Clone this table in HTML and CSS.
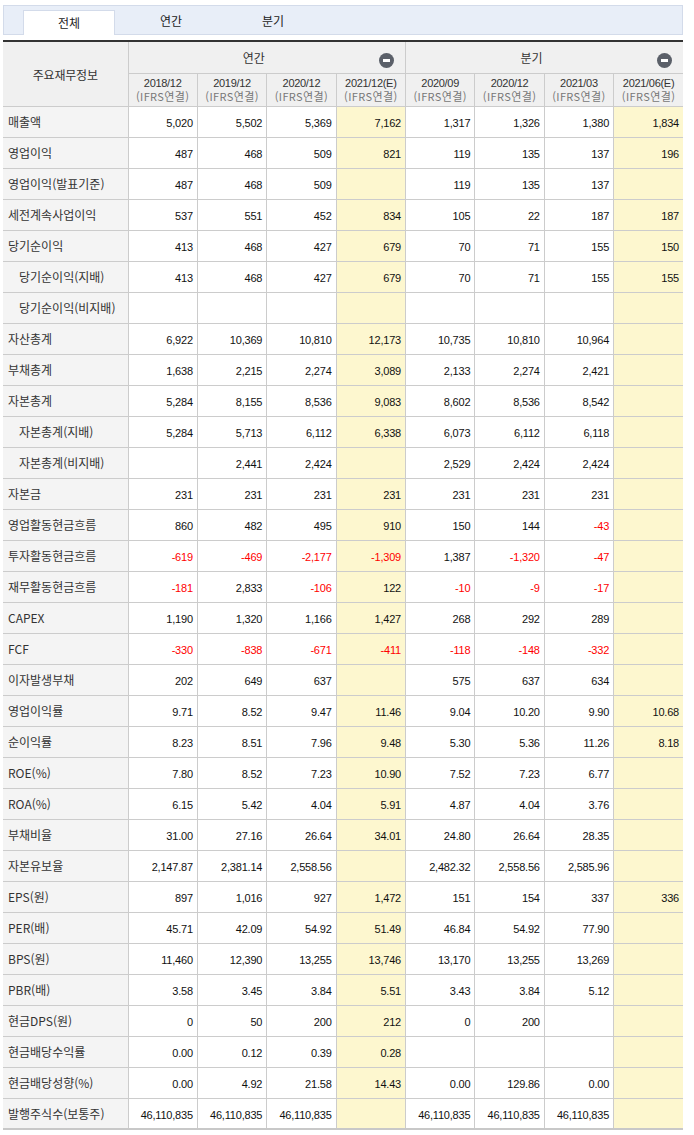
FILE: index.html
```html
<!DOCTYPE html>
<html lang="ko">
<head>
<meta charset="utf-8">
<title>주요재무정보</title>
<link rel="stylesheet" href="styles.css">
</head>
<body>
<div class="page">
  <div class="tabs">
    <span class="tab active">전체</span>
    <span class="tab">연간</span>
    <span class="tab">분기</span>
  </div>
  <table class="fin">
    <colgroup>
      <col class="c-label">
      <col><col><col><col class="est"><col><col><col><col class="est">
    </colgroup>
    <thead>
      <tr class="h1">
        <th rowspan="2" class="corner">주요재무정보</th>
        <th colspan="4" class="grp"><div class="grp-in"><span class="grp-t">연간</span><i class="minus"></i></div></th>
        <th colspan="4" class="grp"><div class="grp-in"><span class="grp-t">분기</span><i class="minus"></i></div></th>
      </tr>
      <tr class="h2">
        <th>2018/12<br><span class="ifrs">(IFRS연결)</span></th>
        <th>2019/12<br><span class="ifrs">(IFRS연결)</span></th>
        <th>2020/12<br><span class="ifrs">(IFRS연결)</span></th>
        <th>2021/12(E)<br><span class="ifrs">(IFRS연결)</span></th>
        <th>2020/09<br><span class="ifrs">(IFRS연결)</span></th>
        <th>2020/12<br><span class="ifrs">(IFRS연결)</span></th>
        <th>2021/03<br><span class="ifrs">(IFRS연결)</span></th>
        <th>2021/06(E)<br><span class="ifrs">(IFRS연결)</span></th>
      </tr>
    </thead>
    <tbody>
      <tr><th>매출액</th><td>5,020</td><td>5,502</td><td>5,369</td><td class="e">7,162</td><td>1,317</td><td>1,326</td><td>1,380</td><td class="e">1,834</td></tr>
      <tr><th>영업이익</th><td>487</td><td>468</td><td>509</td><td class="e">821</td><td>119</td><td>135</td><td>137</td><td class="e">196</td></tr>
      <tr><th>영업이익(발표기준)</th><td>487</td><td>468</td><td>509</td><td class="e"></td><td>119</td><td>135</td><td>137</td><td class="e"></td></tr>
      <tr><th>세전계속사업이익</th><td>537</td><td>551</td><td>452</td><td class="e">834</td><td>105</td><td>22</td><td>187</td><td class="e">187</td></tr>
      <tr><th>당기순이익</th><td>413</td><td>468</td><td>427</td><td class="e">679</td><td>70</td><td>71</td><td>155</td><td class="e">150</td></tr>
      <tr><th class="sub">당기순이익(지배)</th><td>413</td><td>468</td><td>427</td><td class="e">679</td><td>70</td><td>71</td><td>155</td><td class="e">155</td></tr>
      <tr><th class="sub">당기순이익(비지배)</th><td></td><td></td><td></td><td class="e"></td><td></td><td></td><td></td><td class="e"></td></tr>
      <tr><th>자산총계</th><td>6,922</td><td>10,369</td><td>10,810</td><td class="e">12,173</td><td>10,735</td><td>10,810</td><td>10,964</td><td class="e"></td></tr>
      <tr><th>부채총계</th><td>1,638</td><td>2,215</td><td>2,274</td><td class="e">3,089</td><td>2,133</td><td>2,274</td><td>2,421</td><td class="e"></td></tr>
      <tr><th>자본총계</th><td>5,284</td><td>8,155</td><td>8,536</td><td class="e">9,083</td><td>8,602</td><td>8,536</td><td>8,542</td><td class="e"></td></tr>
      <tr><th class="sub">자본총계(지배)</th><td>5,284</td><td>5,713</td><td>6,112</td><td class="e">6,338</td><td>6,073</td><td>6,112</td><td>6,118</td><td class="e"></td></tr>
      <tr><th class="sub">자본총계(비지배)</th><td></td><td>2,441</td><td>2,424</td><td class="e"></td><td>2,529</td><td>2,424</td><td>2,424</td><td class="e"></td></tr>
      <tr><th>자본금</th><td>231</td><td>231</td><td>231</td><td class="e">231</td><td>231</td><td>231</td><td>231</td><td class="e"></td></tr>
      <tr><th>영업활동현금흐름</th><td>860</td><td>482</td><td>495</td><td class="e">910</td><td>150</td><td>144</td><td class="neg">-43</td><td class="e"></td></tr>
      <tr><th>투자활동현금흐름</th><td class="neg">-619</td><td class="neg">-469</td><td class="neg">-2,177</td><td class="e neg">-1,309</td><td>1,387</td><td class="neg">-1,320</td><td class="neg">-47</td><td class="e"></td></tr>
      <tr><th>재무활동현금흐름</th><td class="neg">-181</td><td>2,833</td><td class="neg">-106</td><td class="e">122</td><td class="neg">-10</td><td class="neg">-9</td><td class="neg">-17</td><td class="e"></td></tr>
      <tr><th>CAPEX</th><td>1,190</td><td>1,320</td><td>1,166</td><td class="e">1,427</td><td>268</td><td>292</td><td>289</td><td class="e"></td></tr>
      <tr><th>FCF</th><td class="neg">-330</td><td class="neg">-838</td><td class="neg">-671</td><td class="e neg">-411</td><td class="neg">-118</td><td class="neg">-148</td><td class="neg">-332</td><td class="e"></td></tr>
      <tr><th>이자발생부채</th><td>202</td><td>649</td><td>637</td><td class="e"></td><td>575</td><td>637</td><td>634</td><td class="e"></td></tr>
      <tr><th>영업이익률</th><td>9.71</td><td>8.52</td><td>9.47</td><td class="e">11.46</td><td>9.04</td><td>10.20</td><td>9.90</td><td class="e">10.68</td></tr>
      <tr><th>순이익률</th><td>8.23</td><td>8.51</td><td>7.96</td><td class="e">9.48</td><td>5.30</td><td>5.36</td><td>11.26</td><td class="e">8.18</td></tr>
      <tr><th>ROE(%)</th><td>7.80</td><td>8.52</td><td>7.23</td><td class="e">10.90</td><td>7.52</td><td>7.23</td><td>6.77</td><td class="e"></td></tr>
      <tr><th>ROA(%)</th><td>6.15</td><td>5.42</td><td>4.04</td><td class="e">5.91</td><td>4.87</td><td>4.04</td><td>3.76</td><td class="e"></td></tr>
      <tr><th>부채비율</th><td>31.00</td><td>27.16</td><td>26.64</td><td class="e">34.01</td><td>24.80</td><td>26.64</td><td>28.35</td><td class="e"></td></tr>
      <tr><th>자본유보율</th><td>2,147.87</td><td>2,381.14</td><td>2,558.56</td><td class="e"></td><td>2,482.32</td><td>2,558.56</td><td>2,585.96</td><td class="e"></td></tr>
      <tr><th>EPS(원)</th><td>897</td><td>1,016</td><td>927</td><td class="e">1,472</td><td>151</td><td>154</td><td>337</td><td class="e">336</td></tr>
      <tr><th>PER(배)</th><td>45.71</td><td>42.09</td><td>54.92</td><td class="e">51.49</td><td>46.84</td><td>54.92</td><td>77.90</td><td class="e"></td></tr>
      <tr><th>BPS(원)</th><td>11,460</td><td>12,390</td><td>13,255</td><td class="e">13,746</td><td>13,170</td><td>13,255</td><td>13,269</td><td class="e"></td></tr>
      <tr><th>PBR(배)</th><td>3.58</td><td>3.45</td><td>3.84</td><td class="e">5.51</td><td>3.43</td><td>3.84</td><td>5.12</td><td class="e"></td></tr>
      <tr><th>현금DPS(원)</th><td>0</td><td>50</td><td>200</td><td class="e">212</td><td>0</td><td>200</td><td></td><td class="e"></td></tr>
      <tr><th>현금배당수익률</th><td>0.00</td><td>0.12</td><td>0.39</td><td class="e">0.28</td><td></td><td></td><td></td><td class="e"></td></tr>
      <tr><th>현금배당성향(%)</th><td>0.00</td><td>4.92</td><td>21.58</td><td class="e">14.43</td><td>0.00</td><td>129.86</td><td>0.00</td><td class="e"></td></tr>
      <tr class="last"><th>발행주식수(보통주)</th><td>46,110,835</td><td>46,110,835</td><td>46,110,835</td><td class="e"></td><td>46,110,835</td><td>46,110,835</td><td>46,110,835</td><td class="e"></td></tr>
    </tbody>
  </table>
  <p class="note">(E) : Estimate 컨센서스, 최근 3개월간 증권사에서 발표한 전망치의 평균값입니다</p>
</div>
</body>
</html>
```

FILE: styles.css
```css
html, body {
  margin: 0;
  padding: 0;
  background: #ffffff;
}

body {
  font-family: "Noto Sans CJK KR", "Noto Sans", sans-serif;
  color: #333333;
}

.page {
  width: 680px;
  padding: 5px 0 0 3px;
}

/* tabs */
.tabs {
  box-sizing: border-box;
  height: 30px;
  width: 680px;
  display: flex;
  align-items: flex-end;
  gap: 10px;
  padding-left: 19px;
  background: #e8eef8;
  border: 1px solid #d3dbea;
}

.tab {
  box-sizing: border-box;
  width: 92px;
  height: 25px;
  line-height: 23px;
  text-align: center;
  font-size: 12px;
  color: #222222;
}

.tab.active {
  background: #ffffff;
  border: 1px solid #d3dbea;
  border-bottom: none;
  margin-bottom: -1px;
  height: 25px;
}

/* table */
.fin {
  margin-top: 5px;
  width: 680px;
  table-layout: fixed;
  border-collapse: collapse;
  border-top: 2px solid #333333;
  font-family: "Liberation Sans", "Noto Sans CJK KR", sans-serif;
}

.c-label {
  width: 125px;
}

.fin th,
.fin td {
  border: 1px solid #cccccc;
  padding: 0;
}

.fin tr > :first-child {
  border-left: none;
}

.fin tr > :last-child {
  border-right: none;
}

.fin thead th {
  background: #f0f0f0;
  font-weight: normal;
  text-align: center;
  color: #333333;
}

.h1 {
  height: 32px;
}

.h2 {
  height: 33px;
}

.fin .corner {
  font-family: "Noto Sans CJK KR", sans-serif;
  font-size: 12px;
  letter-spacing: -0.2px;
  border-left: none;
  padding-top: 2px;
}

.grp-in {
  display: flex;
  align-items: center;
  padding-right: 11px;
}

.grp-t {
  flex: 1;
  text-align: center;
  font-family: "Noto Sans CJK KR", sans-serif;
  font-size: 12px;
  color: #333333;
}

.minus {
  position: relative;
  display: block;
  width: 15px;
  height: 15px;
  margin-top: 6px;
  border-radius: 50%;
  background: #5b6069;
}

.minus::after {
  content: "";
  position: absolute;
  left: 4px;
  top: 6px;
  width: 7px;
  height: 3px;
  background: #ffffff;
}

.h2 th {
  font-family: "Liberation Sans", "Noto Sans CJK KR", sans-serif;
  font-size: 11px;
  line-height: 13px;
  color: #555555;
  letter-spacing: -0.3px;
  padding-top: 1px;
}

.ifrs {
  font-family: "Noto Sans CJK KR", sans-serif;
  font-size: 11px;
  color: #777777;
  letter-spacing: 0.4px;
}

.fin tbody tr {
  height: 31px;
}

.fin tbody th {
  background: #f4f4f4;
  font-family: "Noto Sans CJK KR", sans-serif;
  font-size: 12px;
  font-weight: normal;
  text-align: left;
  padding-left: 5px;
  color: #333333;
  white-space: nowrap;
}

.fin tbody th.sub {
  padding-left: 16px;
}

.fin tbody td {
  text-align: right;
  padding-right: 4px;
  padding-top: 3px;
  font-size: 11px;
  color: #111111;
  letter-spacing: -0.2px;
  white-space: nowrap;
}

.fin td.e {
  background: #fdf7cf;
}

.fin td.neg {
  color: #ff0000;
}

.fin tr.last th,
.fin tr.last td {
  border-bottom: 2px solid #c8c8c8;
}

.note {
  margin: 2px 0 0;
  text-align: right;
  font-size: 11px;
  color: #555555;
}
```
